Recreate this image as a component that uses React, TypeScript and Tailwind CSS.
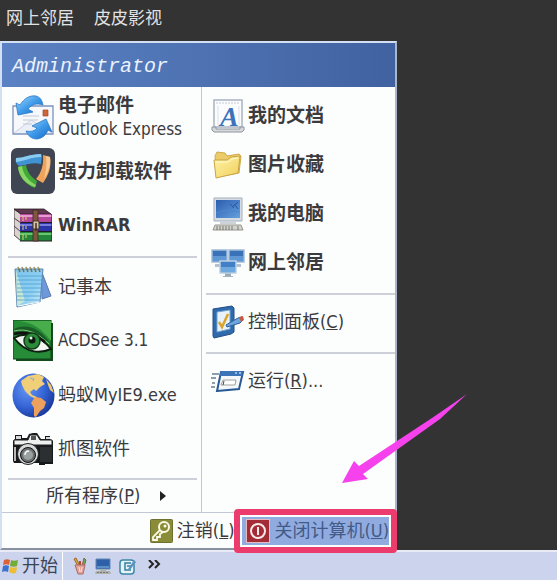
import React from 'react';

const FONT = "font-['DejaVu_Sans_Condensed','DejaVu_Sans','Noto_Sans_CJK_SC',sans-serif]";

function MailIcon() {
  return (
    <svg width="42" height="48" viewBox="0 0 42 48">
      <defs>
        <linearGradient id="mail" x1="0" y1="0" x2="1" y2="1">
          <stop offset="0" stopColor="#a9dcfc" />
          <stop offset="0.5" stopColor="#3f9bea" />
          <stop offset="1" stopColor="#1763bf" />
        </linearGradient>
      </defs>
      <path d="M1 13h40v28H1z" fill="#f6f8fc" stroke="#7c92bd" strokeWidth="1.3" />
      <path d="M2 40l17-13 21 13" fill="#eaeff8" stroke="#cdd5e5" />
      <path d="M11 23h16M11 27h15M11 31h9" stroke="#c3c8d4" />
      <path d="M31 17h5v6h-5z" fill="#cf6238" stroke="#a24a2a" strokeWidth="0.7" />
      <path d="M4 10l4 2C12 6 17 2 24 3c4 1 6 4 7 9-6-2-11-1-15 4l5 3-15 3z" fill="url(#mail)" stroke="#2a78c8" strokeWidth="0.8" />
      <path d="M34 26L20 33l5 2c-2 3-6 4-11 3 2 5 6 8 11 8 6-1 9-4 11-9l4 2z" fill="url(#mail)" stroke="#2a78c8" strokeWidth="0.8" />
    </svg>
  );
}

function ShieldIcon() {
  return (
    <svg width="44" height="46" viewBox="0 0 44 46">
      <rect width="44" height="46" rx="6" fill="#3f4553" />
      <path d="M5 10c8 0 14-4 25-4l1 2-1 8c-8-2-14 1-22 2-3-2-4-5-3-8z" fill="#3f93d3" />
      <path d="M5 10c8 0 14-4 25-4v3c-11 0-15 4-25 5z" fill="#8accf0" />
      <path d="M32 7l7 2c2 10-2 19-7 26l-7-4c5-6 8-14 7-24z" fill="#efa45b" />
      <path d="M35 8l4 1c1 8-2 16-6 22 2-8 3-14 2-23z" fill="#f8ca94" />
      <path d="M7 19l8-2c1 7 5 12 11 16l-2 7C15 37 8 29 7 19z" fill="#43a936" />
      <path d="M7 19l4-1c1 8 6 15 14 19l-1 2C15 36 8 29 7 19z" fill="#8bd567" />
    </svg>
  );
}

function RarIcon() {
  return (
    <svg width="38" height="34" viewBox="0 0 38 34">
      <path d="M0 1l7 5v27l-7-6z" fill="#d9d2cf" stroke="#2b1c22" strokeWidth="0.8" />
      <path d="M0 1h30l7 5H7z" fill="#5f3750" stroke="#2b1c22" strokeWidth="0.8" />
      <path d="M6 6h32v8H6z" fill="#b4489a" />
      <path d="M6 7h32v2H6z" fill="#e59bd0" />
      <path d="M6 15h32v8H6z" fill="#2b35a8" />
      <path d="M6 16h32v2H6z" fill="#7680dc" />
      <path d="M6 24h32v9H6z" fill="#23863a" />
      <path d="M6 25h32v2H6z" fill="#6bc56f" />
      <path d="M6 14.500h32M6 23.500h32M6 33h32M38 6v27" stroke="#241c20" />
      <path d="M0 10l7 5M0 18l7 6" stroke="#4d4148" />
      <path d="M9 8v5M9 17v5M9 26v6M12 9v3M12 18v3M12 27v3" stroke="#e6cf67" />
      <path d="M19 2h5v31h-5z" fill="#81563e" stroke="#3e2a20" strokeWidth="0.8" />
      <rect x="19" y="13" width="6" height="8" rx="1" fill="#d4c6a5" stroke="#463727" />
      <path d="M22 15v8" stroke="#3d2e22" strokeWidth="1.500" />
    </svg>
  );
}

function NotepadIcon() {
  return (
    <svg width="38" height="44" viewBox="0 0 38 44">
      <defs>
        <linearGradient id="note" x1="0" y1="0" x2="1" y2="1">
          <stop offset="0" stopColor="#7cc3ec" />
          <stop offset="0.6" stopColor="#8fd0f3" />
          <stop offset="1" stopColor="#d9f0fa" />
        </linearGradient>
      </defs>
      <path d="M27 5l10 26-9 3z" fill="#6d98da" stroke="#5b78b4" />
      <path d="M1 4h28l-3 33-23 5z" fill="url(#note)" stroke="#5985b5" />
      <path d="M2 5l9 31-8 5z" fill="#e4f3c9" opacity="0.7" />
      <path d="M3 11h25M3 15h25M3 19h24M3 23h24M3 27h24M3 31h23M3 35h23" stroke="#4e9fce" strokeWidth="0.8" />
      <path d="M4 41l22-4" stroke="#fff" />
      <path d="M4 2l2 5M8 2l2 5M12 2l2 5M16 2l2 5M20 2l2 5M24 2l2 5" stroke="#77714d" strokeWidth="1.500" />
      <path d="M3 3h24" stroke="#c3bd85" strokeDasharray="2 2" />
    </svg>
  );
}

function EyeIcon() {
  return (
    <svg width="41" height="42" viewBox="0 0 41 42">
      <path d="M3 3h37v38H3z" fill="#154c1e" />
      <path d="M0 0h38v39H0z" fill="#268c37" stroke="#12451c" />
      <path d="M5 1c15 1 25 9 33 20V1z" fill="#4aad4c" />
      <path d="M1 9c15-7 28 2 36 14-11-9-22-12-36-9z" fill="#195c25" />
      <path d="M1 11c12-3 23 1 35 13" stroke="#7bcf79" fill="none" />
      <path d="M1 18c10-6 25-4 37 11-9 4-24 6-37-11z" fill="#f2f5f0" stroke="#0e2010" strokeWidth="2" />
      <path d="M1 14c12-3 22 0 31 8" stroke="#111" strokeWidth="2.500" fill="none" />
      <circle cx="19" cy="21" r="8" fill="#2b8b3b" stroke="#133b19" strokeWidth="1.500" />
      <circle cx="19" cy="20" r="3.500" fill="#0b180d" />
      <circle cx="18" cy="18" r="1.500" fill="#e2f6e3" />
    </svg>
  );
}

function GlobeIcon() {
  return (
    <svg width="43" height="45" viewBox="0 0 43 45">
      <defs>
        <radialGradient id="globe" cx="0.35" cy="0.35" r="0.7">
          <stop offset="0" stopColor="#6695f4" />
          <stop offset="0.6" stopColor="#3463d5" />
          <stop offset="1" stopColor="#1a3a9a" />
        </radialGradient>
      </defs>
      <ellipse cx="21.500" cy="22.500" rx="21" ry="22" fill="url(#globe)" />
      <path d="M9 8l7-5 10-2 6 3-2 4 3 3-5 3-4 4-2-2-4 3 2 3 5 2-1 2-6-3-5-5-3-6z" fill="#f0cf78" />
      <path d="M23 24l6 1 5 4-2 6-4 3-4 6-2-1v-8l-3-5z" fill="#eda15d" />
      <path d="M34 6l5 6 3 8-4-3-2-5z" fill="#eec774" />
      <path d="M18 5l4 1-1 2" stroke="#8fa9c8" fill="none" />
    </svg>
  );
}

function CameraIcon() {
  return (
    <svg width="42" height="34" viewBox="0 0 42 34">
      <path d="M3 7V3h7v3h5l2-4 4-1h4l4 6h4V4h5v3l3 2v23h-8v1h-6v-2H2l-1-2V9z" fill="#16191b" />
      <path d="M2 8h14l2-5h7l3 5h12v5H2z" fill="#eeefef" stroke="#222" />
      <path d="M19 4h5v4h-5z" fill="#555" />
      <path d="M4 4h5v3H4zM34 5h4v2h-4z" fill="#d7d9d9" />
      <path d="M28 15h12v15H28z" fill="#2c2f31" />
      <circle cx="16" cy="22" r="10.500" fill="#d8dada" stroke="#222" />
      <circle cx="16" cy="23" r="7.500" fill="#686d6f" stroke="#111" />
      <circle cx="16" cy="23" r="5" fill="#9aa1a1" />
      <path d="M13 23c0-3 2-4 4-4" stroke="#f7f7f7" strokeWidth="1.500" fill="none" />
      <path d="M3 15v14" stroke="#eee" strokeWidth="1.500" />
    </svg>
  );
}

function DocumentsIcon() {
  return (
    <svg width="34" height="34" viewBox="0 0 34 34">
      <path d="M3 1h28v27H3z" fill="#fafcfe" stroke="#aab3bf" strokeWidth="1.500" />
      <path d="M5 4h24" stroke="#c4cad3" strokeDasharray="2 1" />
      <path d="M7 7v19M28 7v19" stroke="#dde2e9" />
      <path d="M1 28h4v2h24v-2h4v3l-2 2H3l-2-2z" fill="#d7d9dd" stroke="#8d949e" />
      <text x="9" y="27" fontFamily="Liberation Serif, serif" fontStyle="italic" fontWeight="bold" fontSize="28" fill="#3d73bb">A</text>
    </svg>
  );
}

function FolderIcon() {
  return (
    <svg width="30" height="28" viewBox="0 0 30 28">
      <defs>
        <linearGradient id="folder" x1="0" y1="0" x2="1" y2="1">
          <stop offset="0" stopColor="#fff4a8" />
          <stop offset="1" stopColor="#f0cf5c" />
        </linearGradient>
      </defs>
      <path d="M2 5l2-4 8 1 2 3 12-2 2 2-2 17-22 4z" fill="#eccb68" stroke="#d0aa4b" />
      <path d="M1 9h13l4-3 9-1-2 17-22 5z" fill="url(#folder)" stroke="#c9a548" />
      <path d="M3 11h12l4-3 6-1" stroke="#fffbd2" fill="none" />
    </svg>
  );
}

function ComputerIcon() {
  return (
    <svg width="32" height="34" viewBox="0 0 32 34">
      <defs>
        <linearGradient id="screen" x1="0" y1="0" x2="1" y2="1">
          <stop offset="0" stopColor="#2c5eae" />
          <stop offset="1" stopColor="#64a0df" />
        </linearGradient>
      </defs>
      <path d="M2 1h28v23H2z" fill="#d6dce1" stroke="#a3b0bf" />
      <path d="M4 3h24v18H4z" fill="url(#screen)" />
      <path d="M20 10l6-5M22 11l-4-4M23 8l3 4" stroke="#2a559d" fill="none" />
      <path d="M4 16l9-3 14 2" stroke="#4f86ca" fill="none" />
      <path d="M8 24h16v3H8z" fill="#cdd3d8" />
      <path d="M3 28h26l2 5H1z" fill="#d4d4ce" stroke="#96968f" />
      <path d="M4 30h18M4 32h18M25 30h3M25 32h3" stroke="#78786f" strokeDasharray="2 1" />
    </svg>
  );
}

function NetworkIcon() {
  return (
    <svg width="34" height="28" viewBox="0 0 34 28">
      <path d="M4 15h6v3H4zM24 15h6v3h-6z" fill="#b4c2cf" />
      <path d="M1 1h15v12H1zM18 1h15v12H18z" fill="#3972b8" stroke="#a1bdd9" strokeWidth="1.500" />
      <path d="M2 7h13v5H2zM19 7h13v5H19z" fill="#5f98d4" />
      <path d="M14 24h6v3h-6z" fill="#9cabb9" />
      <path d="M9 12h16v12H9z" fill="#427fc6" stroke="#bfd2e5" strokeWidth="1.500" />
      <path d="M10 18h14v5H10z" fill="#6fa9e0" />
      <path d="M12 27.500h10" stroke="#aab4bd" />
    </svg>
  );
}

function ControlPanelIcon() {
  return (
    <svg width="34" height="34" viewBox="0 0 34 34">
      <path d="M2 4l19-3 2 2v24l-3 2L3 33l-1-2z" fill="#2f6aac" stroke="#244f87" />
      <path d="M6 7l13-2v19L6 27z" fill="#e7f2fb" stroke="#75a4d1" />
      <path d="M8 17l3 5 6-13" fill="none" stroke="#dba52d" strokeWidth="2.500" />
      <path d="M15 20l12-7 4-1 1 3-3 3-13 4z" fill="#6da5dd" stroke="#2a6199" />
      <path d="M28 12l4-1 1 4-3 2z" fill="#c65b45" />
    </svg>
  );
}

function RunIcon() {
  return (
    <svg width="34" height="22" viewBox="0 0 34 22">
      <path d="M1 4h7M0 8h5M1 13h3M0 17h4" stroke="#6b7e91" strokeWidth="1.300" />
      <path d="M10 2h22l-4 17-22 2z" fill="#f5f8fb" stroke="#285a96" strokeWidth="2" />
      <path d="M10 1h22l-1 5H8z" fill="#3b75b8" />
      <path d="M24 3h2M28 3h2" stroke="#fff" />
      <path d="M12 10h13l-1 5H10z" fill="#fff" stroke="#a0a19b" />
      <path d="M13 11l-1 4" stroke="#444" />
    </svg>
  );
}

function KeyIcon() {
  return (
    <svg width="23" height="24" viewBox="0 0 23 24">
      <rect x="0.500" y="0.500" width="22" height="23" rx="1" fill="#8a8c38" stroke="#6d702e" />
      <circle cx="14" cy="8" r="5" fill="none" stroke="#fafae6" strokeWidth="2" />
      <circle cx="15" cy="7" r="1.500" fill="#fafae6" />
      <path d="M10 11l-7 7v3h4v-3h3v-3l3-2" fill="none" stroke="#fafae6" strokeWidth="1.800" />
    </svg>
  );
}

function PowerIcon() {
  return (
    <svg width="24" height="24" viewBox="0 0 24 24">
      <rect x="0.500" y="0.500" width="23" height="23" fill="#a32c36" stroke="#e8b9c1" />
      <circle cx="12" cy="12" r="7" fill="none" stroke="#fbeaea" strokeWidth="2" />
      <path d="M12 8v8" stroke="#fbeaea" strokeWidth="2" />
    </svg>
  );
}

function WindowsIcon() {
  return (
    <svg width="16" height="16" viewBox="0 0 16 16">
      <path d="M2 2c2-1 4-1 6 0L7 7C5 6 3 6 1 7z" fill="#dc6136" />
      <path d="M9 2c2 1 4 1 7 0l-1 6c-2 1-5 1-7 0z" fill="#75ab38" />
      <path d="M1 8c2-1 4-1 6 0l-1 6c-2-1-4-1-6 0z" fill="#3b72d0" />
      <path d="M8 9c2 1 4 1 7 0l-1 6c-3 1-5 0-7-1z" fill="#edbd33" />
    </svg>
  );
}

function BrushesIcon() {
  return (
    <svg width="14" height="18" viewBox="0 0 14 18">
      <path d="M5 9L1 2l2-1 4 8" fill="#d8ac3a" stroke="#a36426" />
      <path d="M9 9l2-8 2 2-2 7" fill="#68a75a" stroke="#8f6046" />
      <path d="M7 9V4" stroke="#b54538" strokeWidth="2" />
      <path d="M2 8h10l-2 9H5z" fill="#e5a19a" stroke="#a66f69" />
      <path d="M6 10l1 5M9 10l-1 5" stroke="#fbe4d7" />
    </svg>
  );
}

function DesktopIcon() {
  return (
    <svg width="16" height="17" viewBox="0 0 16 17">
      <path d="M1 1h14v10H1z" fill="#2e60a9" stroke="#6388b7" />
      <path d="M2 8h12v2H2z" fill="#5c8fc8" />
      <path d="M5 11h6v2H5zM1 13h14l1 3H0z" fill="#afb1ad" />
      <path d="M2 14.500h12" stroke="#777" strokeDasharray="2 1" />
    </svg>
  );
}

function OutboxIcon() {
  return (
    <svg width="17" height="17" viewBox="0 0 17 17">
      <rect x="1" y="2" width="14" height="14" rx="3" fill="#e4f3f8" stroke="#3e86a7" strokeWidth="1.500" />
      <path d="M12 5H6v7h6M8 8h5" stroke="#347f9f" fill="none" strokeWidth="1.500" />
      <path d="M9 11l6-9 2 2-6 8z" fill="#5b95bf" />
    </svg>
  );
}

const PINNED = [
  { name: '强力卸载软件', icon: <ShieldIcon />, size: 'text-[19px]' },
  { name: 'WinRAR', icon: <RarIcon />, size: 'text-lg' },
];

const RECENT = [
  { name: '记事本', icon: <NotepadIcon />, size: 'text-lg' },
  { name: 'ACDSee 3.1', icon: <EyeIcon />, size: 'text-[17px]' },
  { name: '蚂蚁MyIE9.exe', icon: <GlobeIcon />, size: 'text-lg' },
  { name: '抓图软件', icon: <CameraIcon />, size: 'text-lg' },
];

const PLACES = [
  { name: '我的文档', icon: <DocumentsIcon /> },
  { name: '图片收藏', icon: <FolderIcon /> },
  { name: '我的电脑', icon: <ComputerIcon /> },
  { name: '网上邻居', icon: <NetworkIcon /> },
];

interface ItemProps {
  icon: React.ReactNode;
  children: React.ReactNode;
}

function ProgramItem({ icon, children }: ItemProps) {
  return (
    <button type="button" className="flex h-[54px] w-full items-center gap-0.5 pl-2 text-left">
      <span className="flex w-[46px] shrink-0 justify-center">{icon}</span>
      <span className="whitespace-nowrap">{children}</span>
    </button>
  );
}

function PlaceItem({ icon, children }: ItemProps) {
  return (
    <button type="button" className="flex h-[49px] w-full items-center gap-0.5 pl-1 text-left text-lg">
      <span className="flex w-9 shrink-0 justify-center">{icon}</span>
      <span className="whitespace-nowrap">{children}</span>
    </button>
  );
}

function StartMenu() {
  return (
    <nav className="relative w-full max-w-[397px] border-2 border-[#d3dff2] border-r-[#a9b5cb] border-b-[#8990a0] bg-[#fcfdfd] text-[#3b3b3e]">
      <header className="flex h-11 items-center bg-linear-to-r from-[#5b82c4] to-[#4162a0] pt-1 pl-2.5 font-['Liberation_Mono',monospace] text-xl text-[#eaf2ff] italic">
        Administrator
      </header>

      <div className="flex">
        <div className="w-[200px] shrink-0 border-r border-[#c3c8d6] pt-[3px] pr-1">
          <ProgramItem icon={<MailIcon />}>
            <span className="block text-[19px] leading-6 font-bold">电子邮件</span>
            <span className="block text-[17px] leading-6">Outlook Express</span>
          </ProgramItem>
          {PINNED.map((p) => (
            <ProgramItem key={p.name} icon={p.icon}>
              <span className={`font-bold ${p.size}`}>{p.name}</span>
            </ProgramItem>
          ))}
          <hr className="mt-1 mb-0.5 ml-1.5 border-t-2 border-[#cdd0d8]" />
          {RECENT.map((p) => (
            <ProgramItem key={p.name} icon={p.icon}>
              <span className={p.size}>{p.name}</span>
            </ProgramItem>
          ))}
          <hr className="mt-0.5 ml-1.5 border-t-2 border-[#cdd0d8]" />
          <button type="button" className="flex h-8 w-full items-center gap-5 pl-11 text-lg whitespace-nowrap">
            <span>所有程序(<u>P</u>)</span>
            <svg width="6" height="10" viewBox="0 0 6 10"><path d="M0 0l6 5-6 5z" fill="#222" /></svg>
          </button>
        </div>

        <div className="min-w-0 flex-1 pt-1 pl-1">
          {PLACES.map((p) => (
            <PlaceItem key={p.name} icon={p.icon}>
              <span className="text-[19px] font-bold">{p.name}</span>
            </PlaceItem>
          ))}
          <hr className="mt-1.5 mb-0.5 border-t-2 border-[#cdd0d8]" />
          <PlaceItem icon={<ControlPanelIcon />}>控制面板(<u>C</u>)</PlaceItem>
          <hr className="mt-1.5 mb-0.5 border-t-2 border-[#cdd0d8]" />
          <PlaceItem icon={<RunIcon />}>运行(<u>R</u>)...</PlaceItem>
        </div>
      </div>

      <footer className="flex h-9 items-center justify-end gap-2 border-t border-[#c3c8d6] pr-1.5 text-lg whitespace-nowrap">
        <button type="button" className="flex items-center gap-1">
          <KeyIcon />
          <span>注销(<u>L</u>)</span>
        </button>
        <div className="relative">
          <button type="button" className="flex h-7 items-center gap-1 bg-[#8fabe0] pl-1 text-[#435a86]">
            <PowerIcon />
            <span>关闭计算机(<u>U</u>)</span>
          </button>
          <div className="pointer-events-none absolute -inset-2 rounded-sm border-[6px] border-[#ec3b6d]" />
        </div>
      </footer>
    </nav>
  );
}

export default function App() {
  return (
    <main className={`relative flex min-h-screen flex-col bg-[#333333] ${FONT}`}>
      <div className="flex h-[41px] items-center gap-5 pb-1 pl-1.5 text-[17px] whitespace-nowrap text-[#e2e2e2]">
        <button type="button">网上邻居</button>
        <button type="button">皮皮影视</button>
      </div>

      <StartMenu />

      <svg className="pointer-events-none absolute top-[393px] left-[342px]" width="126" height="91" viewBox="0 0 126 91">
        <path d="M0 90L12 68l5 5 38-25 35-23L125 1 98 26 56 56 21 81l5 5z" fill="#f542ed" />
      </svg>

      <footer className="flex flex-1 items-center border-t-2 border-[#e8ebf5] bg-[#cbd3ed] text-lg text-[#3c4556]">
        <button type="button" className="flex items-center gap-1 border-r border-white pr-1 pl-0.5 leading-7 whitespace-nowrap">
          <WindowsIcon />
          开始
        </button>
        <div className="flex items-center gap-2 pl-2.5">
          <button type="button" aria-label="画图"><BrushesIcon /></button>
          <button type="button" aria-label="显示桌面"><DesktopIcon /></button>
          <button type="button" aria-label="Outlook"><OutboxIcon /></button>
          <button type="button" aria-label="更多" className="pb-1 pl-1">
            <svg width="13" height="9" viewBox="0 0 13 9"><path d="M1 0l4 4-4 4M7 0l4 4-4 4" fill="none" stroke="#222" strokeWidth="2" /></svg>
          </button>
        </div>
      </footer>
    </main>
  );
}
